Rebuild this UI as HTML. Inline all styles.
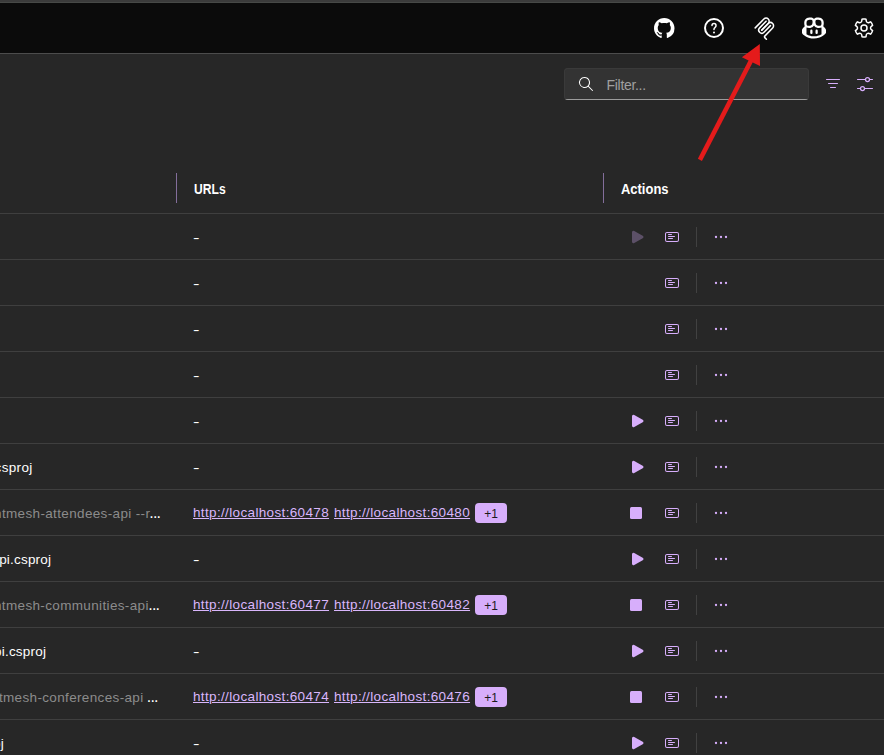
<!DOCTYPE html>
<html lang="en">
<head>
<meta charset="utf-8">
<title>Resources</title>
<style>
  html, body { margin: 0; padding: 0; }
  body {
    width: 884px; height: 755px; overflow: hidden; position: relative;
    background: #272727; color: #ffffff;
    font-family: "Liberation Sans", sans-serif; font-size: 13.500px; line-height: 20px;
  }
  .abs { position: absolute; }
  #topstrip { left: 0; top: 0; width: 884px; height: 2px; background: #3b3b3b; border-bottom: 1px solid #474947; }
  #header { left: 0; top: 3px; width: 884px; height: 50px; background: #0b0b0b; }
  #hline { left: 0; top: 53px; width: 884px; height: 1px; background: #4c4c4c; }
  .hicon { position: absolute; top: 16px; width: 24px; height: 24px; }
  #filter {
    left: 564px; top: 68px; width: 245px; height: 32px; box-sizing: border-box;
    background: #333333; border-radius: 4px; box-shadow: inset 0 0 0 1px #3a3a3a;
    overflow: hidden;
  }
  #filter i { position: absolute; left: 1px; right: 1px; bottom: 0; height: 1px; background: #9c9c9c; }
  #filter span { position: absolute; left: 42.600px; top: 7px; color: #a0a0a0; font-size: 14px; letter-spacing: -0.320px; white-space: nowrap; }
  .rowline { position: absolute; left: 0; width: 884px; height: 1px; background: #3f3f3f; }
  .coldiv { position: absolute; top: 173px; width: 1px; height: 30px; background: #836e9b; }
  .th { position: absolute; top: 179px; font-weight: bold; font-size: 14px; white-space: nowrap; transform-origin: 0 50%; }
  #th-urls { transform: scaleX(0.865); }
  #th-actions { transform: scaleX(0.925); }
  .cell { position: absolute; white-space: nowrap; height: 20px; transform: scaleX(1.450); transform-origin: 0 50%; }
  .left { position: absolute; white-space: nowrap; height: 20px; letter-spacing: 0.350px; }
  .gray { color: #8c8c8c; }
  .ell { font-size: 16px; letter-spacing: -0.850px; }
  a.lnk { color: #d9b6fc; text-decoration: underline; text-underline-offset: 1px; letter-spacing: 0.350px; text-decoration-thickness: 1px; position: absolute; white-space: nowrap; }
  .badge { position: absolute; left: 475px; width: 32px; height: 20px; border-radius: 4px; background: #d7aefb; color: #1a1a1a; font-size: 12px; line-height: 22px; text-align: center; }
  .act { position: absolute; left: 0; top: 0; }
  .vdiv { position: absolute; left: 696px; width: 1px; height: 20px; background: #414141; }
</style>
</head>
<body>
<div id="topstrip" class="abs"></div>
<div id="header" class="abs"></div>
<div id="hline" class="abs"></div>

<!-- header icons -->
<svg class="hicon" style="left:654px;top:17.900px;width:20.500px;height:20.500px" viewBox="0 0 16 16"><path fill="#fff" d="M8 0C3.58 0 0 3.58 0 8c0 3.54 2.29 6.53 5.47 7.59.4.07.55-.17.55-.38 0-.19-.01-.82-.01-1.49-2.01.37-2.53-.49-2.69-.94-.09-.23-.48-.94-.82-1.13-.28-.15-.68-.52-.01-.53.63-.01 1.08.58 1.23.82.72 1.21 1.87.87 2.33.66.07-.52.28-.87.51-1.07-1.78-.2-3.64-.89-3.64-3.95 0-.87.31-1.59.82-2.15-.08-.2-.36-1.02.08-2.12 0 0 .67-.21 2.2.82.64-.18 1.32-.27 2-.27.68 0 1.36.09 2 .27 1.53-1.04 2.2-.82 2.2-.82.44 1.1.16 1.92.08 2.12.51.56.82 1.27.82 2.15 0 3.07-1.87 3.75-3.65 3.95.29.25.54.73.54 1.48 0 1.07-.01 1.93-.01 2.2 0 .21.15.46.55.38A8.013 8.013 0 0 0 16 8c0-4.42-3.58-8-8-8z"/></svg>

<svg class="hicon" style="left:702px" viewBox="0 0 24 24"><path fill="#fff" d="M12 2a10 10 0 1 1 0 20 10 10 0 0 1 0-20Zm0 2a8 8 0 1 0 0 16 8 8 0 0 0 0-16ZM12 15.500a1 1 0 1 1 0 2 1 1 0 0 1 0-2Zm0-8.750a2.750 2.750 0 0 1 2.750 2.750c0 1.010-.3 1.570-1.050 2.360l-.170.170c-.620.620-.780.890-.780 1.470a.750.750 0 0 1-1.500 0c0-1.010.3-1.570 1.050-2.360l.170-.170c.620-.620.780-.890.780-1.470a1.250 1.250 0 0 0-2.500-.130v.130a.750.750 0 0 1-1.500 0A2.750 2.750 0 0 1 12 6.750Z"/></svg>

<svg class="abs" style="left:752.150px;top:14.900px;width:25px;height:25.750px" preserveAspectRatio="none" viewBox="0 0 195 195" fill="none" stroke="#fff" stroke-width="12" stroke-linecap="round">
<path d="M25 97.8528L92.8823 29.9706C102.255 20.598 117.451 20.598 126.823 29.9706C136.196 39.3431 136.196 54.5391 126.823 63.9117L75.5581 115.177"/>
<path d="M76.2653 114.47L126.823 63.9117C136.196 54.5391 151.392 54.5391 160.765 63.9117L161.118 64.2652C170.491 73.6378 170.491 88.8338 161.118 98.2063L99.7248 159.6C96.6006 162.724 96.6006 167.789 99.7248 170.913L112.331 183.52"/>
<path d="M109.853 46.9411L59.6482 97.1457C50.2757 106.518 50.2757 121.714 59.6482 131.087C69.0208 140.459 84.2168 140.459 93.5894 131.087L143.794 80.8822"/>
</svg>

<svg class="hicon" style="left:802px" viewBox="0 0 16 16"><path fill="#fff" d="M7.998 15.035c-4.562 0-7.873-2.914-7.998-3.749V9.338c.085-.628.677-1.686 1.588-2.065.013-.07.024-.143.036-.218.029-.183.06-.384.126-.612-.201-.508-.254-1.084-.254-1.656 0-.87.128-1.769.693-2.484.579-.733 1.494-1.124 2.724-1.261 1.206-.134 2.262.034 2.944.765.05.053.096.108.139.165.044-.057.094-.112.143-.165.682-.731 1.738-.899 2.944-.765 1.230.137 2.145.528 2.724 1.261.566.715.693 1.614.693 2.484 0 .572-.053 1.148-.254 1.656.066.228.098.429.126.612.012.076.024.148.037.218.924.385 1.522 1.471 1.591 2.095v1.872c0 .766-3.351 3.795-8.002 3.795Zm0-1.485c2.280 0 4.584-1.110 5.002-1.433V7.862l-.023-.116c-.49.210-1.075.291-1.727.291-1.146 0-2.059-.327-2.710-.991A3.222 3.222 0 0 1 8 6.303a3.240 3.240 0 0 1-.544.743c-.65.664-1.563.991-2.710.991-.652 0-1.236-.081-1.727-.291l-.023.116v4.255c.419.323 2.722 1.433 5.002 1.433ZM6.762 2.830c-.193-.206-.637-.413-1.682-.297-1.019.113-1.479.404-1.713.7-.247.312-.369.789-.369 1.554 0 .793.129 1.171.308 1.371.162.181.519.379 1.442.379.853 0 1.339-.235 1.638-.54.315-.322.527-.827.617-1.553.117-.935-.037-1.395-.241-1.614Zm4.155-.297c-1.044-.116-1.488.091-1.681.297-.204.219-.359.679-.242 1.614.091.726.303 1.231.618 1.553.299.305.784.54 1.638.54.922 0 1.280-.198 1.442-.379.179-.2.308-.578.308-1.371 0-.765-.123-1.242-.37-1.554-.233-.296-.693-.587-1.713-.7Z"/><path fill="#fff" d="M6.250 9.037a.75.75 0 0 1 .75.750v1.501a.75.75 0 0 1-1.500 0V9.787a.75.75 0 0 1 .750-.750Zm4.250.750v1.501a.75.75 0 0 1-1.500 0V9.787a.75.75 0 0 1 1.500 0Z"/></svg>

<svg class="hicon" id="gear" style="left:852px" viewBox="0 0 24 24"><path fill="#fff" d="M12.01 2.25c.74 0 1.47.1 2.18.25.32.07.55.33.59.65l.17 1.53a1.38 1.38 0 0 0 1.92 1.11l1.4-.61a.75.75 0 0 1 .85.17 9.99 9.99 0 0 1 2.2 3.8c.1.3-.01.64-.27.83l-1.24.92a1.38 1.38 0 0 0 0 2.220l1.240.92c.26.19.37.52.27.83a9.990 9.990 0 0 1-2.200 3.800.75.75 0 0 1-.85.170l-1.400-.620a1.380 1.380 0 0 0-1.930 1.120l-.170 1.520a.75.75 0 0 1-.570.650 9.520 9.520 0 0 1-4.400 0 .75.75 0 0 1-.570-.650l-.170-1.520a1.380 1.380 0 0 0-1.930-1.110l-1.400.620a.75.75 0 0 1-.850-.180 9.990 9.990 0 0 1-2.200-3.800.75.75 0 0 1 .270-.830l1.240-.920a1.380 1.380 0 0 0 0-2.220l-1.240-.910a.75.75 0 0 1-.280-.840 9.990 9.990 0 0 1 2.200-3.800.75.75 0 0 1 .850-.170l1.400.620a1.380 1.380 0 0 0 1.930-1.120l.170-1.520a.75.75 0 0 1 .580-.650c.720-.160 1.450-.240 2.200-.260Zm0 1.500c-.45 0-.9.040-1.350.120l-.110.970a2.890 2.890 0 0 1-4.030 2.330l-.9-.4A8.490 8.490 0 0 0 4.290 9.100l.8.590a2.880 2.880 0 0 1 0 4.640l-.8.590c.32.850.78 1.630 1.350 2.330l.9-.4a2.880 2.880 0 0 1 4.020 2.320l.1.990c.9.150 1.800.150 2.700 0l.1-.990a2.880 2.880 0 0 1 4.020-2.320l.9.400a8.490 8.490 0 0 0 1.360-2.330l-.8-.590a2.880 2.880 0 0 1 0-4.640l.8-.590a8.490 8.490 0 0 0-1.350-2.330l-.9.400a2.880 2.880 0 0 1-4.020-2.330l-.110-.970c-.45-.080-.9-.120-1.350-.120ZM12 8.250a3.750 3.750 0 1 1 0 7.500 3.750 3.750 0 0 1 0-7.500Zm0 1.500a2.250 2.250 0 1 0 0 4.500 2.250 2.250 0 0 0 0-4.500Z"/></svg>

<!--ROWS-->

<div id="filter" class="abs">
<svg class="abs" style="left:12px;top:6.400px;width:20px;height:20px" viewBox="0 0 20 20"><path fill="#fff" d="M8.500 3a5.500 5.500 0 0 1 4.230 9.020l4.120 4.130a.5.5 0 0 1-.630.760l-.070-.060-4.130-4.120A5.500 5.500 0 1 1 8.500 3Zm0 1a4.500 4.500 0 1 0 0 9 4.500 4.500 0 0 0 0-9Z"/></svg>
<span>Filter...</span><i></i>
</div>
<svg class="abs" style="left:823px;top:74px;width:20px;height:20px" viewBox="0 0 20 20" stroke="#d7aefb" stroke-width="1" stroke-linecap="round"><path d="M3.500 5.500H16.500M5.500 9.500H14.500M7.500 13.500H12.500"/></svg>
<svg class="abs" style="left:855px;top:74px;width:20px;height:20px" viewBox="0 0 20 20" stroke="#d7aefb" stroke-width="1" stroke-linecap="round" fill="none"><path d="M2.500 5.500H10M15 5.500H17.500M2.500 14.500H5M10 14.500H17.500"/><circle cx="12.500" cy="5.500" r="2" stroke-width="1.250"/><circle cx="7.500" cy="14.500" r="2" stroke-width="1.250"/></svg>


<div class="coldiv" style="left:176px"></div>
<div class="coldiv" style="left:603px"></div>
<div class="th" style="left:194px" id="th-urls">URLs</div>
<div class="th" style="left:621px" id="th-actions">Actions</div>

<div class="rowline" style="top:213px"></div>
<div class="rowline" style="top:259px"></div>
<div class="rowline" style="top:305px"></div>
<div class="rowline" style="top:351px"></div>
<div class="rowline" style="top:397px"></div>
<div class="rowline" style="top:443px"></div>
<div class="rowline" style="top:489px"></div>
<div class="rowline" style="top:535px"></div>
<div class="rowline" style="top:581px"></div>
<div class="rowline" style="top:627px"></div>
<div class="rowline" style="top:673px"></div>
<div class="rowline" style="top:719px"></div>
<div class="cell" style="left:192.700px;top:228px">-</div>
<svg class="abs" style="left:629px;top:229px;width:16px;height:16px;opacity:0.3" viewBox="0 0 16 16"><path fill="#d7aefb" d="M5.220 2.070A1.500 1.500 0 0 0 3 3.370v9.260a1.500 1.500 0 0 0 2.220 1.310l8.480-4.630a1.500 1.500 0 0 0 0-2.630L5.220 2.070Z"/></svg>
<svg class="abs" style="left:664px;top:229px;width:16px;height:16px" viewBox="0 0 16 16"><path fill="#d7aefb" d="M4.500 5a.5.5 0 0 0 0 1h3a.5.5 0 0 0 0-1h-3Zm0 2a.5.5 0 0 0 0 1h6a.5.5 0 0 0 0-1h-6Zm0 2a.5.5 0 0 0 0 1h4a.5.5 0 0 0 0-1h-4ZM1 5c0-1.100.9-2 2-2h10a2 2 0 0 1 2 2v6a2 2 0 0 1-2 2H3a2 2 0 0 1-2-2V5Zm2-1a1 1 0 0 0-1 1v6a1 1 0 0 0 1 1h10a1 1 0 0 0 1-1V5a1 1 0 0 0-1-1H3Z"/></svg>
<div class="vdiv" style="top:227px"></div>
<svg class="abs" style="left:711px;top:227px;width:20px;height:20px" viewBox="0 0 20 20" fill="#d7aefb"><circle cx="5" cy="10" r="1.150"/><circle cx="10" cy="10" r="1.150"/><circle cx="15" cy="10" r="1.150"/></svg>
<div class="cell" style="left:192.700px;top:274px">-</div>
<svg class="abs" style="left:664px;top:275px;width:16px;height:16px" viewBox="0 0 16 16"><path fill="#d7aefb" d="M4.500 5a.5.5 0 0 0 0 1h3a.5.5 0 0 0 0-1h-3Zm0 2a.5.5 0 0 0 0 1h6a.5.5 0 0 0 0-1h-6Zm0 2a.5.5 0 0 0 0 1h4a.5.5 0 0 0 0-1h-4ZM1 5c0-1.100.9-2 2-2h10a2 2 0 0 1 2 2v6a2 2 0 0 1-2 2H3a2 2 0 0 1-2-2V5Zm2-1a1 1 0 0 0-1 1v6a1 1 0 0 0 1 1h10a1 1 0 0 0 1-1V5a1 1 0 0 0-1-1H3Z"/></svg>
<div class="vdiv" style="top:273px"></div>
<svg class="abs" style="left:711px;top:273px;width:20px;height:20px" viewBox="0 0 20 20" fill="#d7aefb"><circle cx="5" cy="10" r="1.150"/><circle cx="10" cy="10" r="1.150"/><circle cx="15" cy="10" r="1.150"/></svg>
<div class="cell" style="left:192.700px;top:320px">-</div>
<svg class="abs" style="left:664px;top:321px;width:16px;height:16px" viewBox="0 0 16 16"><path fill="#d7aefb" d="M4.500 5a.5.5 0 0 0 0 1h3a.5.5 0 0 0 0-1h-3Zm0 2a.5.5 0 0 0 0 1h6a.5.5 0 0 0 0-1h-6Zm0 2a.5.5 0 0 0 0 1h4a.5.5 0 0 0 0-1h-4ZM1 5c0-1.100.9-2 2-2h10a2 2 0 0 1 2 2v6a2 2 0 0 1-2 2H3a2 2 0 0 1-2-2V5Zm2-1a1 1 0 0 0-1 1v6a1 1 0 0 0 1 1h10a1 1 0 0 0 1-1V5a1 1 0 0 0-1-1H3Z"/></svg>
<div class="vdiv" style="top:319px"></div>
<svg class="abs" style="left:711px;top:319px;width:20px;height:20px" viewBox="0 0 20 20" fill="#d7aefb"><circle cx="5" cy="10" r="1.150"/><circle cx="10" cy="10" r="1.150"/><circle cx="15" cy="10" r="1.150"/></svg>
<div class="cell" style="left:192.700px;top:366px">-</div>
<svg class="abs" style="left:664px;top:367px;width:16px;height:16px" viewBox="0 0 16 16"><path fill="#d7aefb" d="M4.500 5a.5.5 0 0 0 0 1h3a.5.5 0 0 0 0-1h-3Zm0 2a.5.5 0 0 0 0 1h6a.5.5 0 0 0 0-1h-6Zm0 2a.5.5 0 0 0 0 1h4a.5.5 0 0 0 0-1h-4ZM1 5c0-1.100.9-2 2-2h10a2 2 0 0 1 2 2v6a2 2 0 0 1-2 2H3a2 2 0 0 1-2-2V5Zm2-1a1 1 0 0 0-1 1v6a1 1 0 0 0 1 1h10a1 1 0 0 0 1-1V5a1 1 0 0 0-1-1H3Z"/></svg>
<div class="vdiv" style="top:365px"></div>
<svg class="abs" style="left:711px;top:365px;width:20px;height:20px" viewBox="0 0 20 20" fill="#d7aefb"><circle cx="5" cy="10" r="1.150"/><circle cx="10" cy="10" r="1.150"/><circle cx="15" cy="10" r="1.150"/></svg>
<div class="cell" style="left:192.700px;top:412px">-</div>
<svg class="abs" style="left:629px;top:413px;width:16px;height:16px;opacity:1" viewBox="0 0 16 16"><path fill="#d7aefb" d="M5.220 2.070A1.500 1.500 0 0 0 3 3.370v9.260a1.500 1.500 0 0 0 2.220 1.310l8.480-4.630a1.500 1.500 0 0 0 0-2.630L5.220 2.070Z"/></svg>
<svg class="abs" style="left:664px;top:413px;width:16px;height:16px" viewBox="0 0 16 16"><path fill="#d7aefb" d="M4.500 5a.5.5 0 0 0 0 1h3a.5.5 0 0 0 0-1h-3Zm0 2a.5.5 0 0 0 0 1h6a.5.5 0 0 0 0-1h-6Zm0 2a.5.5 0 0 0 0 1h4a.5.5 0 0 0 0-1h-4ZM1 5c0-1.100.9-2 2-2h10a2 2 0 0 1 2 2v6a2 2 0 0 1-2 2H3a2 2 0 0 1-2-2V5Zm2-1a1 1 0 0 0-1 1v6a1 1 0 0 0 1 1h10a1 1 0 0 0 1-1V5a1 1 0 0 0-1-1H3Z"/></svg>
<div class="vdiv" style="top:411px"></div>
<svg class="abs" style="left:711px;top:411px;width:20px;height:20px" viewBox="0 0 20 20" fill="#d7aefb"><circle cx="5" cy="10" r="1.150"/><circle cx="10" cy="10" r="1.150"/><circle cx="15" cy="10" r="1.150"/></svg>
<div class="left" style="right:851.35px;top:458px;letter-spacing:0.35px">.csproj</div>
<div class="cell" style="left:192.700px;top:458px">-</div>
<svg class="abs" style="left:629px;top:459px;width:16px;height:16px;opacity:1" viewBox="0 0 16 16"><path fill="#d7aefb" d="M5.220 2.070A1.500 1.500 0 0 0 3 3.370v9.260a1.500 1.500 0 0 0 2.220 1.310l8.480-4.630a1.500 1.500 0 0 0 0-2.630L5.220 2.070Z"/></svg>
<svg class="abs" style="left:664px;top:459px;width:16px;height:16px" viewBox="0 0 16 16"><path fill="#d7aefb" d="M4.500 5a.5.5 0 0 0 0 1h3a.5.5 0 0 0 0-1h-3Zm0 2a.5.5 0 0 0 0 1h6a.5.5 0 0 0 0-1h-6Zm0 2a.5.5 0 0 0 0 1h4a.5.5 0 0 0 0-1h-4ZM1 5c0-1.100.9-2 2-2h10a2 2 0 0 1 2 2v6a2 2 0 0 1-2 2H3a2 2 0 0 1-2-2V5Zm2-1a1 1 0 0 0-1 1v6a1 1 0 0 0 1 1h10a1 1 0 0 0 1-1V5a1 1 0 0 0-1-1H3Z"/></svg>
<div class="vdiv" style="top:457px"></div>
<svg class="abs" style="left:711px;top:457px;width:20px;height:20px" viewBox="0 0 20 20" fill="#d7aefb"><circle cx="5" cy="10" r="1.150"/><circle cx="10" cy="10" r="1.150"/><circle cx="15" cy="10" r="1.150"/></svg>
<div class="left gray" style="right:733.75px;top:504px">ntmesh-attendees-api --r</div>
<div class="left ell" style="left:149.3px;top:503px">...</div>
<a class="lnk l1" style="left:193px;top:503px">http://localhost:60478</a>
<a class="lnk l2" style="left:334px;top:503px">http://localhost:60480</a>
<div class="badge" style="top:503px">+1</div>
<svg class="abs" style="left:628px;top:505px;width:16px;height:16px" viewBox="0 0 16 16"><rect x="2" y="2" width="12" height="12" rx="1.500" fill="#d7aefb"/></svg>
<svg class="abs" style="left:664px;top:505px;width:16px;height:16px" viewBox="0 0 16 16"><path fill="#d7aefb" d="M4.500 5a.5.5 0 0 0 0 1h3a.5.5 0 0 0 0-1h-3Zm0 2a.5.5 0 0 0 0 1h6a.5.5 0 0 0 0-1h-6Zm0 2a.5.5 0 0 0 0 1h4a.5.5 0 0 0 0-1h-4ZM1 5c0-1.100.9-2 2-2h10a2 2 0 0 1 2 2v6a2 2 0 0 1-2 2H3a2 2 0 0 1-2-2V5Zm2-1a1 1 0 0 0-1 1v6a1 1 0 0 0 1 1h10a1 1 0 0 0 1-1V5a1 1 0 0 0-1-1H3Z"/></svg>
<div class="vdiv" style="top:503px"></div>
<svg class="abs" style="left:711px;top:503px;width:20px;height:20px" viewBox="0 0 20 20" fill="#d7aefb"><circle cx="5" cy="10" r="1.150"/><circle cx="10" cy="10" r="1.150"/><circle cx="15" cy="10" r="1.150"/></svg>
<div class="left" style="right:832.80px;top:550px;letter-spacing:0.20px">api.csproj</div>
<div class="cell" style="left:192.700px;top:550px">-</div>
<svg class="abs" style="left:629px;top:551px;width:16px;height:16px;opacity:1" viewBox="0 0 16 16"><path fill="#d7aefb" d="M5.220 2.070A1.500 1.500 0 0 0 3 3.370v9.260a1.500 1.500 0 0 0 2.220 1.310l8.480-4.630a1.500 1.500 0 0 0 0-2.630L5.220 2.070Z"/></svg>
<svg class="abs" style="left:664px;top:551px;width:16px;height:16px" viewBox="0 0 16 16"><path fill="#d7aefb" d="M4.500 5a.5.5 0 0 0 0 1h3a.5.5 0 0 0 0-1h-3Zm0 2a.5.5 0 0 0 0 1h6a.5.5 0 0 0 0-1h-6Zm0 2a.5.5 0 0 0 0 1h4a.5.5 0 0 0 0-1h-4ZM1 5c0-1.100.9-2 2-2h10a2 2 0 0 1 2 2v6a2 2 0 0 1-2 2H3a2 2 0 0 1-2-2V5Zm2-1a1 1 0 0 0-1 1v6a1 1 0 0 0 1 1h10a1 1 0 0 0 1-1V5a1 1 0 0 0-1-1H3Z"/></svg>
<div class="vdiv" style="top:549px"></div>
<svg class="abs" style="left:711px;top:549px;width:20px;height:20px" viewBox="0 0 20 20" fill="#d7aefb"><circle cx="5" cy="10" r="1.150"/><circle cx="10" cy="10" r="1.150"/><circle cx="15" cy="10" r="1.150"/></svg>
<div class="left gray" style="right:735.25px;top:596px">ntmesh-communities-api</div>
<div class="left ell" style="left:148.3px;top:595px">...</div>
<a class="lnk l1" style="left:193px;top:595px">http://localhost:60477</a>
<a class="lnk l2" style="left:334px;top:595px">http://localhost:60482</a>
<div class="badge" style="top:595px">+1</div>
<svg class="abs" style="left:628px;top:597px;width:16px;height:16px" viewBox="0 0 16 16"><rect x="2" y="2" width="12" height="12" rx="1.500" fill="#d7aefb"/></svg>
<svg class="abs" style="left:664px;top:597px;width:16px;height:16px" viewBox="0 0 16 16"><path fill="#d7aefb" d="M4.500 5a.5.5 0 0 0 0 1h3a.5.5 0 0 0 0-1h-3Zm0 2a.5.5 0 0 0 0 1h6a.5.5 0 0 0 0-1h-6Zm0 2a.5.5 0 0 0 0 1h4a.5.5 0 0 0 0-1h-4ZM1 5c0-1.100.9-2 2-2h10a2 2 0 0 1 2 2v6a2 2 0 0 1-2 2H3a2 2 0 0 1-2-2V5Zm2-1a1 1 0 0 0-1 1v6a1 1 0 0 0 1 1h10a1 1 0 0 0 1-1V5a1 1 0 0 0-1-1H3Z"/></svg>
<div class="vdiv" style="top:595px"></div>
<svg class="abs" style="left:711px;top:595px;width:20px;height:20px" viewBox="0 0 20 20" fill="#d7aefb"><circle cx="5" cy="10" r="1.150"/><circle cx="10" cy="10" r="1.150"/><circle cx="15" cy="10" r="1.150"/></svg>
<div class="left" style="right:837.90px;top:642px;letter-spacing:0.20px">api.csproj</div>
<div class="cell" style="left:192.700px;top:642px">-</div>
<svg class="abs" style="left:629px;top:643px;width:16px;height:16px;opacity:1" viewBox="0 0 16 16"><path fill="#d7aefb" d="M5.220 2.070A1.500 1.500 0 0 0 3 3.370v9.260a1.500 1.500 0 0 0 2.220 1.310l8.480-4.630a1.500 1.500 0 0 0 0-2.630L5.220 2.070Z"/></svg>
<svg class="abs" style="left:664px;top:643px;width:16px;height:16px" viewBox="0 0 16 16"><path fill="#d7aefb" d="M4.500 5a.5.5 0 0 0 0 1h3a.5.5 0 0 0 0-1h-3Zm0 2a.5.5 0 0 0 0 1h6a.5.5 0 0 0 0-1h-6Zm0 2a.5.5 0 0 0 0 1h4a.5.5 0 0 0 0-1h-4ZM1 5c0-1.100.9-2 2-2h10a2 2 0 0 1 2 2v6a2 2 0 0 1-2 2H3a2 2 0 0 1-2-2V5Zm2-1a1 1 0 0 0-1 1v6a1 1 0 0 0 1 1h10a1 1 0 0 0 1-1V5a1 1 0 0 0-1-1H3Z"/></svg>
<div class="vdiv" style="top:641px"></div>
<svg class="abs" style="left:711px;top:641px;width:20px;height:20px" viewBox="0 0 20 20" fill="#d7aefb"><circle cx="5" cy="10" r="1.150"/><circle cx="10" cy="10" r="1.150"/><circle cx="15" cy="10" r="1.150"/></svg>
<div class="left gray" style="right:740.45px;top:688px">ntmesh-conferences-api</div>
<div class="left ell" style="left:146.8px;top:687px">...</div>
<a class="lnk l1" style="left:193px;top:687px">http://localhost:60474</a>
<a class="lnk l2" style="left:334px;top:687px">http://localhost:60476</a>
<div class="badge" style="top:687px">+1</div>
<svg class="abs" style="left:628px;top:689px;width:16px;height:16px" viewBox="0 0 16 16"><rect x="2" y="2" width="12" height="12" rx="1.500" fill="#d7aefb"/></svg>
<svg class="abs" style="left:664px;top:689px;width:16px;height:16px" viewBox="0 0 16 16"><path fill="#d7aefb" d="M4.500 5a.5.5 0 0 0 0 1h3a.5.5 0 0 0 0-1h-3Zm0 2a.5.5 0 0 0 0 1h6a.5.5 0 0 0 0-1h-6Zm0 2a.5.5 0 0 0 0 1h4a.5.5 0 0 0 0-1h-4ZM1 5c0-1.100.9-2 2-2h10a2 2 0 0 1 2 2v6a2 2 0 0 1-2 2H3a2 2 0 0 1-2-2V5Zm2-1a1 1 0 0 0-1 1v6a1 1 0 0 0 1 1h10a1 1 0 0 0 1-1V5a1 1 0 0 0-1-1H3Z"/></svg>
<div class="vdiv" style="top:687px"></div>
<svg class="abs" style="left:711px;top:687px;width:20px;height:20px" viewBox="0 0 20 20" fill="#d7aefb"><circle cx="5" cy="10" r="1.150"/><circle cx="10" cy="10" r="1.150"/><circle cx="15" cy="10" r="1.150"/></svg>
<div class="left" style="right:879.85px;top:734px;letter-spacing:0.35px">oj</div>
<div class="cell" style="left:192.700px;top:734px">-</div>
<svg class="abs" style="left:629px;top:735px;width:16px;height:16px;opacity:1" viewBox="0 0 16 16"><path fill="#d7aefb" d="M5.220 2.070A1.500 1.500 0 0 0 3 3.370v9.260a1.500 1.500 0 0 0 2.220 1.310l8.480-4.630a1.500 1.500 0 0 0 0-2.630L5.220 2.070Z"/></svg>
<svg class="abs" style="left:664px;top:735px;width:16px;height:16px" viewBox="0 0 16 16"><path fill="#d7aefb" d="M4.500 5a.5.5 0 0 0 0 1h3a.5.5 0 0 0 0-1h-3Zm0 2a.5.5 0 0 0 0 1h6a.5.5 0 0 0 0-1h-6Zm0 2a.5.5 0 0 0 0 1h4a.5.5 0 0 0 0-1h-4ZM1 5c0-1.100.9-2 2-2h10a2 2 0 0 1 2 2v6a2 2 0 0 1-2 2H3a2 2 0 0 1-2-2V5Zm2-1a1 1 0 0 0-1 1v6a1 1 0 0 0 1 1h10a1 1 0 0 0 1-1V5a1 1 0 0 0-1-1H3Z"/></svg>
<div class="vdiv" style="top:733px"></div>
<svg class="abs" style="left:711px;top:733px;width:20px;height:20px" viewBox="0 0 20 20" fill="#d7aefb"><circle cx="5" cy="10" r="1.150"/><circle cx="10" cy="10" r="1.150"/><circle cx="15" cy="10" r="1.150"/></svg>

<svg class="abs" style="left:0;top:0;width:884px;height:755px;pointer-events:none" viewBox="0 0 884 755">
<path d="M699.900 159.900L751.500 59.800" stroke="#e41b1b" stroke-width="4.600" fill="none"/>
<path d="M759.800 43.900L741.900 57.200L760 66Z" fill="#e41b1b"/>
</svg>

<!--/ROWS-->
</body>
</html>
